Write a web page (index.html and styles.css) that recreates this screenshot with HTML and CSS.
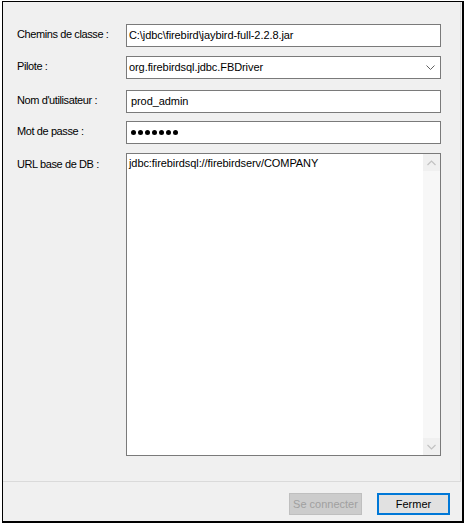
FILE: index.html
```html
<!DOCTYPE html>
<html lang="fr">
<head>
<meta charset="utf-8">
<title>Connexion JDBC</title>
<link rel="stylesheet" href="styles.css">
</head>
<body>
<div class="frame">
  <div class="panel">
    <div class="row r1">
      <div class="label">Chemins de classe :</div>
      <div class="field">C:\jdbc\firebird\jaybird-full-2.2.8.jar</div>
    </div>
    <div class="row r2">
      <div class="label">Pilote :</div>
      <div class="field combo">
        <span>org.firebirdsql.jdbc.FBDriver</span>
        <svg class="chev" width="9" height="6" viewBox="0 0 9 6"><path d="M0.5 0.5 L4.5 4.5 L8.5 0.5" fill="none" stroke="#606060" stroke-width="1"/></svg>
      </div>
    </div>
    <div class="row r3">
      <div class="label">Nom d'utilisateur :</div>
      <div class="field pad">prod_admin</div>
    </div>
    <div class="row r4">
      <div class="label">Mot de passe :</div>
      <div class="field pad dots"><i></i><i></i><i></i><i></i><i></i><i></i><i></i></div>
    </div>
    <div class="row r5">
      <div class="label">URL base de DB :</div>
      <div class="field area">
        <div class="area-text">jdbc:firebirdsql://firebirdserv/COMPANY</div>
        <div class="vscroll">
          <div class="sbtn"><svg width="9" height="6" viewBox="0 0 9 6"><path d="M0.5 5 L4.5 1 L8.5 5" fill="none" stroke="#c2c2c2" stroke-width="1.2"/></svg></div>
          <div class="track"></div>
          <div class="sbtn"><svg width="9" height="6" viewBox="0 0 9 6"><path d="M0.5 1 L4.5 5 L8.5 1" fill="none" stroke="#c2c2c2" stroke-width="1.2"/></svg></div>
        </div>
      </div>
    </div>
  </div>
  <div class="footer">
    <div class="btn disabled">Se connecter</div>
    <div class="btn default">Fermer</div>
  </div>
</div>
</body>
</html>
```
FILE: styles.css
```css
html, body {
  margin: 0;
  padding: 0;
  background: #ffffff;
}
body {
  font-family: "Liberation Sans", Arial, sans-serif;
  font-size: 11px;
  color: #000000;
}
.frame {
  margin: 1px 0 0 2px;
  width: 459px;
  height: 519px;
  border-left: 1px solid #000;
  border-top: 1px solid #000;
  border-right: 2px solid #000;
  border-bottom: 2px solid #000;
  background: #f0f0f0;
  display: flex;
  flex-direction: column;
}
.panel {
  width: 457px;
  height: 457px;
  border-right: 1px solid #dadada;
  border-bottom: 1px solid #dadada;
  padding-top: 22px;
}
.row {
  display: flex;
  align-items: center;
  margin-left: 14px;
}
.r2 { margin-top: 9px; }
.r3 { margin-top: 11px; }
.r4 { margin-top: 8px; }
.r5 { margin-top: 9px; align-items: flex-start; }
.label {
  width: 109px;
  line-height: 13px;
  letter-spacing: -0.4px;
  position: relative;
  top: -1px;
  white-space: nowrap;
}
.r5 .label { margin-top: 5px; top: 0; }
.field {
  width: 311px;
  height: 21px;
  border: 1px solid #7a7a7a;
  background: #ffffff;
  line-height: 21px;
  padding-left: 2px;
  letter-spacing: -0.08px;
  white-space: nowrap;
  overflow: hidden;
}
.field.pad { padding-left: 4px; width: 309px; }
.combo {
  display: flex;
  align-items: center;
  justify-content: space-between;
}
.combo .chev { margin-right: 5px; }
.dots {
  display: flex;
  align-items: center;
  gap: 2px;
}
.dots i {
  display: block;
  width: 5px;
  height: 5px;
  border-radius: 50%;
  background: #000;
}
.area {
  height: 301px;
  display: flex;
  padding-left: 0;
  width: 313px;
}
.area-text {
  flex: 1;
  padding-left: 2px;
  line-height: 15px;
  padding-top: 2px;
}
.vscroll {
  width: 17px;
  display: flex;
  flex-direction: column;
  background: #f0f0f0;
}
.sbtn {
  height: 17px;
  display: flex;
  align-items: center;
  justify-content: center;
  background: #f0f0f0;
}
.track {
  flex: 1;
  background: #f7f7f7;
}
.footer {
  flex: 1;
  display: flex;
  justify-content: flex-end;
  align-items: flex-start;
  gap: 15px;
  padding: 11px 12px 0 0;
}
.btn {
  width: 73px;
  height: 22px;
  box-sizing: border-box;
  display: flex;
  align-items: center;
  justify-content: center;
  font-size: 11px;
}
.btn.disabled {
  background: #cccccc;
  border: 1px solid #bfbfbf;
  color: #a0a0a0;
}
.btn.default {
  background: #e1e1e1;
  border: 2px solid #0078d7;
  color: #000;
}
```
